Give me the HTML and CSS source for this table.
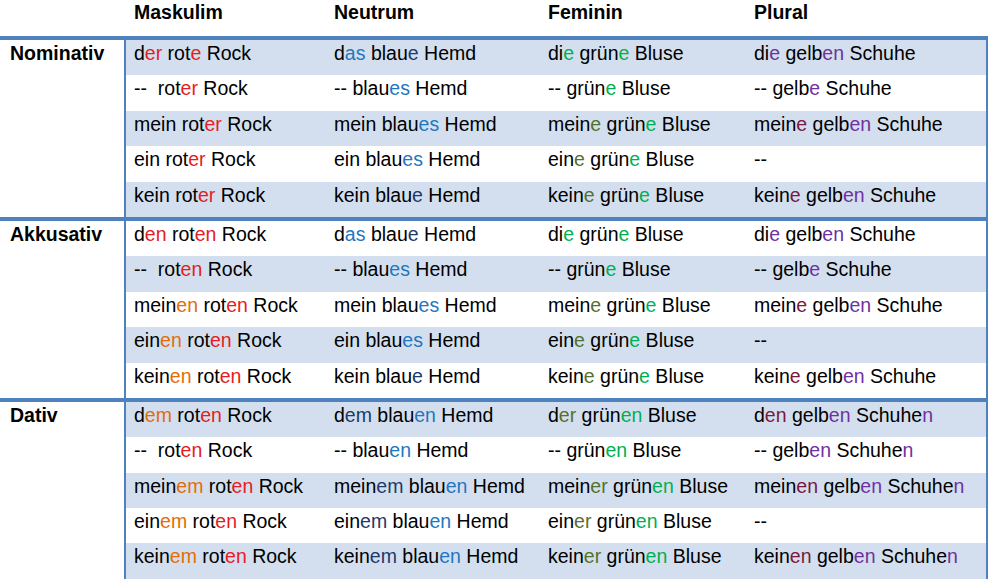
FILE: index.html
```html
<!DOCTYPE html>
<html lang="de">
<head>
<meta charset="utf-8">
<title>Adjektivdeklination</title>
<link rel="stylesheet" href="styles.css">
</head>
<body>
<table class="decl">
  <colgroup>
    <col class="c-label">
    <col class="c-mask">
    <col class="c-neut">
    <col class="c-fem">
    <col class="c-plur">
  </colgroup>
  <thead>
    <tr class="head">
      <th class="corner"></th>
      <th class="mask">Maskulim</th>
      <th>Neutrum</th>
      <th>Feminin</th>
      <th>Plural</th>
    </tr>
  </thead>
  <tbody>
    <tr class="first s">
      <th class="case" rowspan="5">Nominativ</th>
      <td class="mask">d<span class="r">er</span> rot<span class="r">e</span> Rock</td>
      <td>d<span class="b">as</span> blau<span class="n">e</span> Hemd</td>
      <td>di<span class="g">e</span> grün<span class="g">e</span> Bluse</td>
      <td class="last">di<span class="p">e</span> gelb<span class="p">en</span> Schuhe</td>
    </tr>
    <tr>
      <td class="mask">--&nbsp; rot<span class="r">er</span> Rock</td>
      <td>-- blau<span class="b">es</span> Hemd</td>
      <td>-- grün<span class="g">e</span> Bluse</td>
      <td class="last">-- gelb<span class="p">e</span> Schuhe</td>
    </tr>
    <tr class="s">
      <td class="mask">mein rot<span class="r">er</span> Rock</td>
      <td>mein blau<span class="b">es</span> Hemd</td>
      <td>mein<span class="o">e</span> grün<span class="g">e</span> Bluse</td>
      <td class="last">mein<span class="m">e</span> gelb<span class="p">en</span> Schuhe</td>
    </tr>
    <tr>
      <td class="mask">ein rot<span class="r">er</span> Rock</td>
      <td>ein blau<span class="b">es</span> Hemd</td>
      <td>ein<span class="o">e</span> grün<span class="g">e</span> Bluse</td>
      <td class="last">--</td>
    </tr>
    <tr class="s">
      <td class="mask">kein rot<span class="r">er</span> Rock</td>
      <td>kein blau<span class="n">e</span> Hemd</td>
      <td>kein<span class="o">e</span> grün<span class="g">e</span> Bluse</td>
      <td class="last">kein<span class="m">e</span> gelb<span class="p">en</span> Schuhe</td>
    </tr>
  </tbody>
  <tbody>
    <tr class="first">
      <th class="case" rowspan="5">Akkusativ</th>
      <td class="mask">d<span class="r">en</span> rot<span class="r">en</span> Rock</td>
      <td>d<span class="b">as</span> blau<span class="n">e</span> Hemd</td>
      <td>di<span class="g">e</span> grün<span class="g">e</span> Bluse</td>
      <td class="last">di<span class="p">e</span> gelb<span class="p">en</span> Schuhe</td>
    </tr>
    <tr class="s">
      <td class="mask">--&nbsp; rot<span class="r">en</span> Rock</td>
      <td>-- blau<span class="b">es</span> Hemd</td>
      <td>-- grün<span class="g">e</span> Bluse</td>
      <td class="last">-- gelb<span class="p">e</span> Schuhe</td>
    </tr>
    <tr>
      <td class="mask">mein<span class="or">en</span> rot<span class="r">en</span> Rock</td>
      <td>mein blau<span class="b">es</span> Hemd</td>
      <td>mein<span class="o">e</span> grün<span class="g">e</span> Bluse</td>
      <td class="last">mein<span class="m">e</span> gelb<span class="p">en</span> Schuhe</td>
    </tr>
    <tr class="s">
      <td class="mask">ein<span class="or">en</span> rot<span class="r">en</span> Rock</td>
      <td>ein blau<span class="b">es</span> Hemd</td>
      <td>ein<span class="o">e</span> grün<span class="g">e</span> Bluse</td>
      <td class="last">--</td>
    </tr>
    <tr>
      <td class="mask">kein<span class="or">en</span> rot<span class="r">en</span> Rock</td>
      <td>kein blau<span class="n">e</span> Hemd</td>
      <td>kein<span class="o">e</span> grün<span class="g">e</span> Bluse</td>
      <td class="last">kein<span class="m">e</span> gelb<span class="p">en</span> Schuhe</td>
    </tr>
  </tbody>
  <tbody>
    <tr class="first s">
      <th class="case" rowspan="5">Dativ</th>
      <td class="mask">d<span class="or">em</span> rot<span class="r">en</span> Rock</td>
      <td>d<span class="n">em</span> blau<span class="b">en</span> Hemd</td>
      <td>d<span class="o">er</span> grün<span class="g">en</span> Bluse</td>
      <td class="last">d<span class="m">en</span> gelb<span class="p">en</span> Schuhe<span class="p">n</span></td>
    </tr>
    <tr>
      <td class="mask">--&nbsp; rot<span class="r">en</span> Rock</td>
      <td>-- blau<span class="b">en</span> Hemd</td>
      <td>-- grün<span class="g">en</span> Bluse</td>
      <td class="last">-- gelb<span class="p">en</span> Schuhe<span class="p">n</span></td>
    </tr>
    <tr class="s">
      <td class="mask">mein<span class="or">em</span> rot<span class="r">en</span> Rock</td>
      <td>mein<span class="n">em</span> blau<span class="b">en</span> Hemd</td>
      <td>mein<span class="o">er</span> grün<span class="g">en</span> Bluse</td>
      <td class="last">mein<span class="m">en</span> gelb<span class="p">en</span> Schuhe<span class="p">n</span></td>
    </tr>
    <tr>
      <td class="mask">ein<span class="or">em</span> rot<span class="r">en</span> Rock</td>
      <td>ein<span class="n">em</span> blau<span class="b">en</span> Hemd</td>
      <td>ein<span class="o">er</span> grün<span class="g">en</span> Bluse</td>
      <td class="last">--</td>
    </tr>
    <tr class="s">
      <td class="mask">kein<span class="or">em</span> rot<span class="r">en</span> Rock</td>
      <td>kein<span class="n">em</span> blau<span class="b">en</span> Hemd</td>
      <td>kein<span class="o">er</span> grün<span class="g">en</span> Bluse</td>
      <td class="last">kein<span class="m">en</span> gelb<span class="p">en</span> Schuhe<span class="p">n</span></td>
    </tr>
  </tbody>
</table>
</body>
</html>
```

FILE: styles.css
```css
* {
  box-sizing: border-box;
}

html, body {
  margin: 0;
  padding: 0;
  background: #ffffff;
}

body {
  font-family: "Liberation Sans", Arial, sans-serif;
  font-size: 19.5px;
  color: #000000;
}

.decl {
  table-layout: fixed;
  width: 988px;
  border-collapse: separate;
  border-spacing: 0;
}

.c-label { width: 126px; }
.c-mask { width: 199px; }
.c-neut { width: 214px; }
.c-fem { width: 206px; }
.c-plur { width: 243px; }

.decl th,
.decl td {
  padding: 2px 0 0 9px;
  vertical-align: top;
  text-align: left;
  white-space: nowrap;
  line-height: normal;
}

.decl .mask {
  padding-left: 8px;
}

.head {
  height: 36px;
}

.head th {
  padding-top: 1px;
  font-weight: bold;
}

.decl tbody tr {
  height: 35.4px;
}

.decl tbody tr.first {
  height: 39.4px;
}

.decl tr.first > th,
.decl tr.first > td {
  border-top: 4px solid #4f81bd;
}

.decl .case {
  padding-left: 10px;
  font-weight: bold;
  background: #ffffff;
  border-right: 2px solid #4f81bd;
}

.decl td.last {
  border-right: 2px solid #4f81bd;
}

.decl tr.s > td {
  background: #d3dfee;
}

.r { color: #e51c23; }
.b { color: #1f77c0; }
.n { color: #1d3a6b; }
.g { color: #00b050; }
.o { color: #55702c; }
.p { color: #7030a0; }
.m { color: #7a1840; }
.or { color: #e36c09; }
```
